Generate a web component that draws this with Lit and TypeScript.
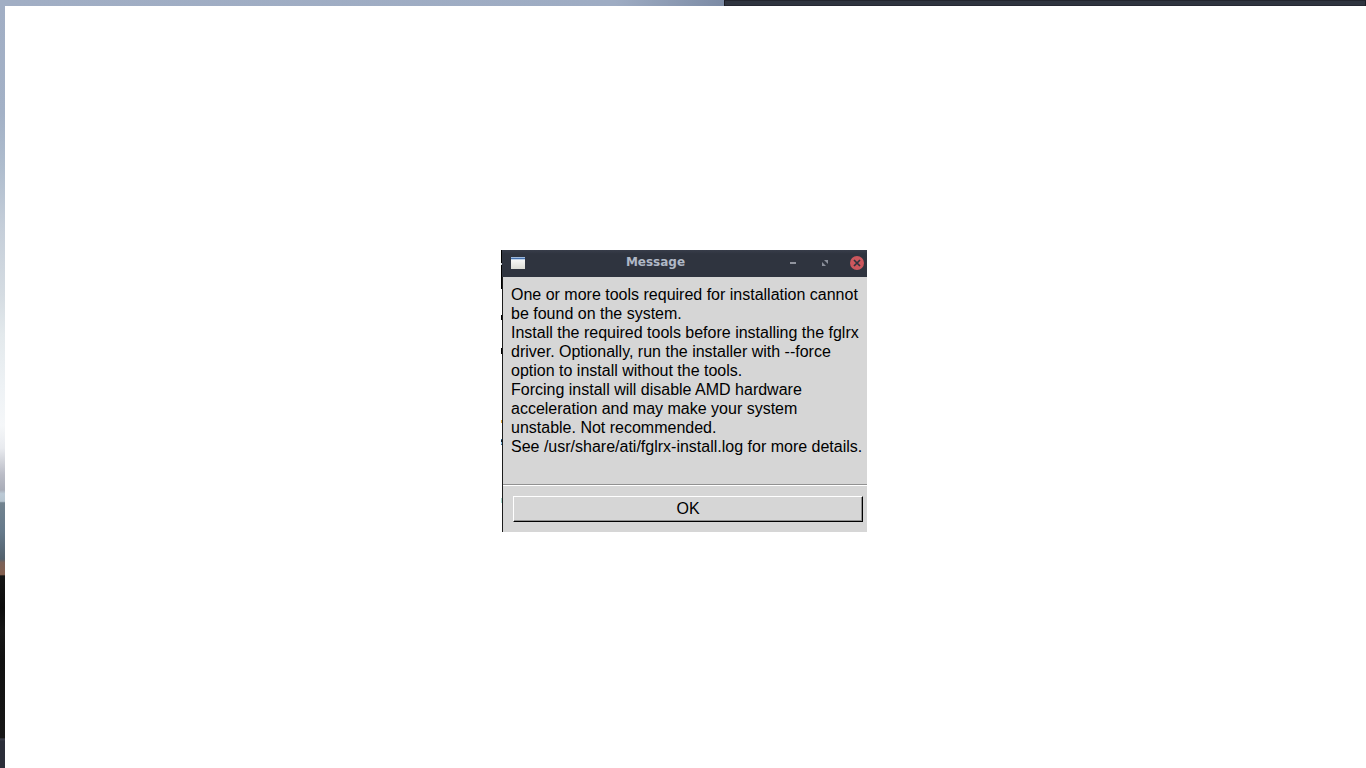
import { LitElement, html, css } from "lit";
import { customElement, property } from "lit/decorators.js";

@customElement("message-window")
class MessageWindow extends LitElement {
  @property() heading = "";
  @property({ attribute: false }) lines: string[] = [];

  static styles = css`
    :host {
      display: flex;
      font-family: "Liberation Sans", Arial, sans-serif;
    }
    .edge {
      flex: none;
      width: 1px;
      background: linear-gradient(
        #000 0 13px, #c8ccd0 13px 15px, #000 15px 39px, #fff 39px 65px,
        #000 65px 70px, #fff 70px 98px, #000 98px 104px, #fff 104px 170px,
        #d9a13c 170px 173px, #fff 173px 189px, #3f6f94 189px 190px,
        #123 190px 192px, #8fc4e8 192px 194px, #3f6f94 194px 195px,
        #fff 195px 248px, #a9d8cd 248px 253px, #fff 253px
      );
    }
    .frame {
      flex: 1;
      background: #d6d6d6;
    }
    .titlebar {
      display: flex;
      align-items: center;
      height: 27px;
      box-sizing: border-box;
      padding: 0 3px 2px 9px;
      background: linear-gradient(#383d4a, #2f343f 4px);
    }
    .title {
      flex: 1;
      margin: 0;
      text-align: center;
      font: bold 12px/25px "DejaVu Sans", sans-serif;
      color: #afb8c6;
    }
    .controls {
      display: flex;
      gap: 18px;
    }
    .control {
      display: flex;
      width: 14px;
      height: 14px;
      padding: 0;
      border: 0;
      background: none;
    }
    .icon {
      display: block;
      flex: none;
    }
    .body {
      border-left: 1px solid #1c1c1c;
    }
    .text {
      margin: 0;
      padding: 8px 0 28px 8px;
      font-size: 16px;
      line-height: 19px;
      color: #000;
      white-space: nowrap;
    }
    .line {
      display: block;
    }
    .actions {
      border-top: 1px solid #919191;
      padding: 11px 4px 10px 10px;
      box-shadow: inset 0 1px #fff;
    }
    .ok {
      display: block;
      width: 100%;
      height: 26px;
      padding: 0;
      border: 1px solid;
      border-color: #fff #000 #000 #fff;
      border-radius: 0;
      background: #d6d6d6;
      box-shadow: inset -1px -1px #919191;
      font: 16px/22px "Liberation Sans", Arial, sans-serif;
      color: #000;
    }
  `;

  render() {
    return html`
      <div class="edge"></div>
      <section class="frame">
        <header class="titlebar">
          <svg class="icon" width="14" height="12" viewBox="0 0 14 12" shape-rendering="crispEdges">
            <defs>
              <linearGradient id="paper" x2="0" y2="1">
                <stop stop-color="#fff" />
                <stop offset="1" stop-color="#dcdcd6" />
              </linearGradient>
            </defs>
            <rect width="14" height="12" fill="url(#paper)" />
            <rect width="14" height="1" fill="#9db9dc" />
            <rect y="1" width="14" height="1" fill="#4470ad" />
            <rect y="2" width="14" height="1" fill="#c0d2e8" />
          </svg>
          <h1 class="title">${this.heading}</h1>
          <div class="controls">
            <button class="control" aria-label="Minimize">
              <svg class="icon" width="14" height="14" viewBox="0 0 14 14">
                <rect x="4" y="6" width="6" height="2" fill="#90949e" />
              </svg>
            </button>
            <button class="control" aria-label="Maximize">
              <svg class="icon" width="14" height="14" viewBox="0 0 14 14" fill="#8b909b">
                <path d="M6 4h4v4zM4 6v4h4z" />
              </svg>
            </button>
            <button class="control" aria-label="Close">
              <svg class="icon" width="14" height="14" viewBox="0 0 14 14">
                <circle cx="7" cy="7" r="7" fill="#cc575d" />
                <path d="M4 4l6 6M10 4l-6 6" stroke="#2f343f" stroke-width="1.7" />
              </svg>
            </button>
          </div>
        </header>
        <div class="body">
          <p class="text">${this.lines.map((l) => html`<span class="line">${l}</span>`)}</p>
          <div class="actions"><button class="ok">OK</button></div>
        </div>
      </section>
    `;
  }
}

@customElement("app-root")
class AppRoot extends LitElement {
  static styles = css`
    :host {
      display: grid;
      grid-template: 6px 1fr / 5px 1fr;
      position: relative;
      height: 100vh;
      overflow: hidden;
      background: #fff;
    }
    .top {
      grid-column: 1 / -1;
      display: grid;
      grid-template-columns: 53fr 47fr;
      background: #9fadc3;
    }
    .sky {
      background: linear-gradient(90deg, #a1aec4, #9eacc3 85%, #7c8ba5);
    }
    .panel {
      box-sizing: border-box;
      border-top: 1px solid #23252e;
      border-left: 1px solid #1b1d25;
      border-right: 1px solid #1b1d25;
      background: #2f343f;
      box-shadow: inset 0 -1px #262833;
    }
    .wallpaper {
      background: linear-gradient(
        #a1aec4 0, #a3b1c6 14%, #aebccd 21%, #c5ced9 29%, #d5dce2 38%,
        #e3e9ec 43%, #eef2f5 50%, #f5f7f9 55%, #e9ebef 58%, #babcc6 61.5%,
        #a9adb8 63.5%, #bccad6 64%, #b7c5d0 65%, #72838f 65.2%,
        #65798a 69%, #53616d 72.6%, #7a6158 73%, #84604f 74.6%,
        #151515 74.8%, #0c0c0c 79%, #171717 82%, #111 86%,
        #171717 96%, #3b3d48 96.2%, #2b2e39 96.5%
      );
    }
    .dialog {
      position: absolute;
      left: 501px;
      top: 250px;
      width: 366px;
    }
  `;

  private lines = [
    "One or more tools required for installation cannot",
    "be found on the system.",
    "Install the required tools before installing the fglrx",
    "driver. Optionally, run the installer with --force",
    "option to install without the tools.",
    "Forcing install will disable AMD hardware",
    "acceleration and may make your system",
    "unstable. Not recommended.",
    "See /usr/share/ati/fglrx-install.log for more details.",
  ];

  render() {
    return html`
      <div class="top">
        <div class="sky"></div>
        <div class="panel"></div>
      </div>
      <div class="wallpaper"></div>
      <message-window class="dialog" heading="Message" .lines=${this.lines}></message-window>
    `;
  }
}
